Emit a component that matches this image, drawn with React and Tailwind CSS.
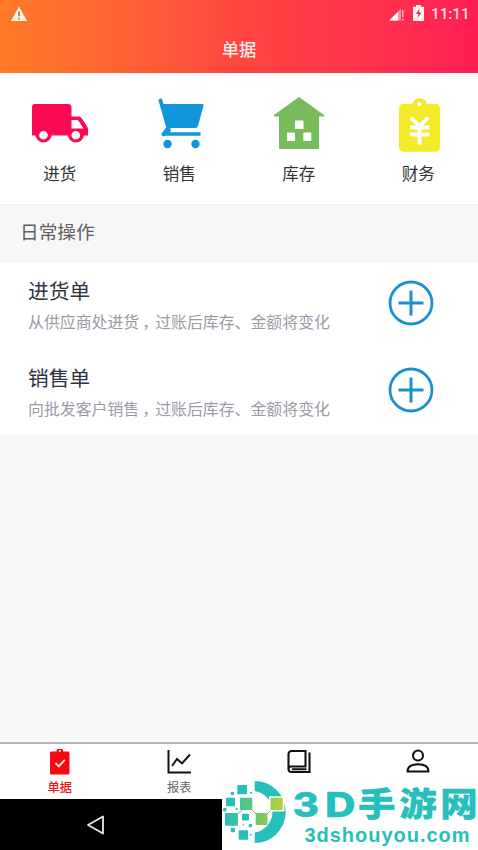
import React from "react";

const TEAL = "#26bfbc";

function StatusBar() {
  return (
    <div className="flex h-[26px] items-center pt-[2px]">
      <svg className="ml-[11px] h-[16px] w-[16px]" viewBox="0 0 16 16">
        <path d="M8 0.5L16 15H0z" fill="#fff4e6" />
        <path d="M8 5.5v5M8 12v1.6" stroke="#b8683a" strokeWidth="1.5" />
      </svg>
      <svg className="ml-auto mb-[2px] h-[15px] w-[17px]" viewBox="0 0 17 15">
        <path d="M0 14.500L12 2.500v12z" fill="#ff8fa0" />
        <path d="M0 14.500L9 6v8.500z" fill="#fff" />
        <path d="M13.800 4v7M13.800 12.500v2" stroke="#ffb0bc" strokeWidth="1.600" />
      </svg>
      <svg className="ml-[7px] mb-[3px] h-[16px] w-[11px]" viewBox="0 0 11 16">
        <path d="M3 0h5v1.800h3V16H0V1.800h3z" fill="#fff0f2" />
        <path d="M6.500 3.500L3 9h2.500L4.500 13 8.500 7.500H6z" fill="#cf3850" />
      </svg>
      <span className="ml-[7px] mr-[9px] w-[38px] whitespace-nowrap text-[15.200px] leading-[20px] text-[#ffdbe1] font-medium [font-family:Roboto,sans-serif]">11:11</span>
    </div>
  );
}

const TruckIcon = () => (
  <svg className="h-[56px] w-[56px]" viewBox="0 0 56 56">
    <path
      fillRule="evenodd"
      d="M3 7h33q3.500 0 3.500 3.500V19.500h7q2 0 3.200 1.800l5.300 8q1 1.500 1 3V38.500h-4a8.200 8.200 0 0 1-16.200 0H19.600a8.200 8.200 0 0 1-16.200 0H0V10q0-3 3-3zM39.500 23v8.500h12L46.500 23.800q-.500-.8-1.500-.8zM11.500 34a4.300 4.300 0 1 0 0 8.600 4.300 4.300 0 0 0 0-8.600zM43.800 34a4.300 4.300 0 1 0 0 8.600 4.300 4.300 0 0 0 0-8.600z"
      fill="#fa0a50"
    />
  </svg>
);

const CartIcon = () => (
  <svg className="ml-[3px] h-[56px] w-[48px]" viewBox="0 0 48 56">
    <path d="M3.500 3.500L12 33.500 6.500 37.500" fill="none" stroke="#1296db" strokeWidth="3.800" strokeLinecap="round" strokeLinejoin="round" />
    <path d="M4 7h41.500q1.400 0 1 1.500L41 29q-.7 2-2.500 2H12z" fill="#1296db" />
    <path d="M10.500 31.500L6.500 37h37" fill="none" stroke="#1296db" strokeWidth="3.600" strokeLinejoin="round" />
    <circle cx="10.500" cy="47" r="4.200" fill="#1296db" />
    <circle cx="38.500" cy="47" r="4.200" fill="#1296db" />
  </svg>
);

const HouseIcon = () => (
  <svg className="ml-[1px] h-[56px] w-[52px]" viewBox="0 0 52 56">
    <path
      fillRule="evenodd"
      d="M26 0L51 18q1 1.500-.5 1.500H46V51q0 1-1 1H7q-1 0-1-1V19.500H1.500Q0 19.500 1 18zM22 23.500v8.500h8.500v-8.500zM14 35.500V44h8v-8.500zM30.300 35.500V44h8v-8.500z"
      fill="#78bb5c"
    />
  </svg>
);

const FinanceIcon = () => (
  <svg className="ml-[3px] h-[56px] w-[42px]" viewBox="0 0 42 56">
    <path
      fillRule="evenodd"
      d="M5 7.500h8.500a7.500 7.500 0 0 1 14.500 0h8q5 0 5 5V50q0 5.500-5 5.500H5q-5 0-5-5.500V12.500q0-5 5-5zM20.500 6a2 2 0 1 0 0 4 2 2 0 0 0 0-4z"
      fill="#f3ea29"
      transform="translate(0 -.7)"
    />
    <path d="M12 20.500l8.500 9 8.500-9M20.500 29.500v18M11 30.500h19.500M11 37.500h19.500" fill="none" stroke="#fff" strokeWidth="4" />
  </svg>
);

const entries = [
  { label: "进货", Icon: TruckIcon },
  { label: "销售", Icon: CartIcon },
  { label: "库存", Icon: HouseIcon },
  { label: "财务", Icon: FinanceIcon },
];

function Operation({ title, before, after }) {
  return (
    <div className="flex h-[87px] items-start pl-[28px] pr-[44px]">
      <div className="flex-1 pt-[12px]">
        <div className="text-[20.700px] leading-[30px] text-[#303340]">{title}</div>
        <div className="mt-[5px] flex whitespace-nowrap text-[15.900px] leading-[24px] text-[#9a9ba6]">
          <span>{before}</span>
          <span className="w-[15.900px] pl-[3px] [font-feature-settings:'halt']">，</span>
          <span>{after}</span>
        </div>
      </div>
      <svg className="mt-[17px] h-[46px] w-[46px]" viewBox="0 0 46 46">
        <circle cx="23" cy="23" r="21" fill="none" stroke="#1a90d0" strokeWidth="2.800" />
        <path d="M23 10.500v25M10.500 23h25" stroke="#1a90d0" strokeWidth="3" />
      </svg>
    </div>
  );
}

function TabItem({ label, labelClass, children }) {
  return (
    <div className="flex flex-1 flex-col items-center pt-[5px]">
      <svg className="h-[27px] w-[26px]" viewBox="0 0 26 27">{children}</svg>
      <span className={`text-[12.300px] leading-[22px] ${labelClass || ""}`}>{label}</span>
    </div>
  );
}

const tiles = [
  [226, 797.700, 9, 8.500], [237.300, 785, 9.700, 9.300], [242, 813.700, 7, 6.700],
  [238.700, 830.300, 9.400, 9.400], [230.700, 791.700, 3.300, 3.300], [223, 808, 3.500, 3.200],
  [235.500, 808, 2.200, 2], [230.700, 828, 4.300, 4.300], [248.700, 824, 3.300, 3.200],
  [250, 791.700, 2, 2], [242.500, 824, 1.600, 1.600], [250, 834, 1.800, 1.800],
];

function Watermark() {
  return (
    <svg className="absolute bottom-0 right-0 h-[74px] w-[256px]" viewBox="222 776 256 74">
      <defs>
        <linearGradient id="blend" gradientUnits="userSpaceOnUse" x1="225" y1="0" x2="283" y2="0">
          <stop offset="0" stopColor="#26bfbc" />
          <stop offset=".5" stopColor="#66c66f" />
          <stop offset="1" stopColor="#b8d432" />
        </linearGradient>
      </defs>
      <path d="M254.700 781a31 31 0 0 1 0 62v-10.500a21 21 0 0 0 0-41.500z" fill={TEAL} />
      {tiles.map(([x, y, w, h], i) => (
        <rect key={i} x={x} y={y} width={w} height={h} rx=".8" fill={TEAL} />
      ))}
      <rect x="269" y="796.200" width="15.400" height="15.400" rx="1" fill="#fff" />
      <path d="M237 814.500l7-6M251 809l6 6M266 815l6-6" stroke="url(#blend)" strokeWidth="1" />
      <rect x="225" y="813" width="13" height="12.700" rx="1" fill="url(#blend)" />
      <rect x="240" y="797.700" width="12.300" height="12.300" rx="1" fill="url(#blend)" />
      <rect x="255.700" y="813" width="11.800" height="12" rx="1" fill="url(#blend)" />
      <rect x="270.500" y="797.700" width="12.300" height="12.300" rx="1" fill="url(#blend)" />
      <g fill={TEAL} stroke={TEAL}>
        <text x="292.500" y="816.500" fontSize="33.500" fontWeight="800" strokeWidth=".4" textLength="26.500" lengthAdjust="spacingAndGlyphs" className="[font-family:Inter,sans-serif]">3</text>
        <text x="325" y="816.500" fontSize="33.500" fontWeight="800" strokeWidth=".4" textLength="30.500" lengthAdjust="spacingAndGlyphs" className="[font-family:Inter,sans-serif]">D</text>
        <text transform="translate(358 816) scale(1.12 1)" x="0" y="0" fontSize="33.500" fontWeight="900" strokeWidth=".3" textLength="107" lengthAdjust="spacing" className="[font-family:'Noto_Sans_CJK_SC',sans-serif]">手游网</text>
        <text x="304.500" y="841.500" fontSize="20" fontWeight="700" stroke="none" textLength="165" lengthAdjust="spacing" className="[font-family:'Liberation_Sans',sans-serif]">3dshouyou.com</text>
      </g>
    </svg>
  );
}

export default function App() {
  return (
    <div className="relative flex h-[850px] w-[478px] flex-col overflow-hidden bg-[#f7f7f7] [font-family:'Noto_Sans_CJK_SC',sans-serif]">
      <header className="h-[73px] shrink-0 bg-linear-to-r from-[#ff7a25] via-[#ff4540] to-[#ff1c54]">
        <StatusBar />
        <h1 className="pt-[10px] text-center text-[17.300px] font-medium leading-[26px] text-[#ffe9e4]">单据</h1>
      </header>

      <div className="flex h-[132px] shrink-0 border-b border-[#f1f1f1] bg-white pt-[24px]">
        {entries.map(({ label, Icon }) => (
          <div key={label} className="flex flex-1 flex-col items-center">
            <Icon />
            <span className="mt-[8px] text-[16.500px] leading-[24px] text-[#333]">{label}</span>
          </div>
        ))}
      </div>

      <div className="h-[58px] shrink-0 pl-[20px] pt-[12px] text-[18.700px] leading-[28px] text-[#606060]">日常操作</div>

      <div className="h-[172px] shrink-0 bg-white">
        <Operation title="进货单" before="从供应商处进货" after="过账后库存、金额将变化" />
        <Operation title="销售单" before="向批发客户销售" after="过账后库存、金额将变化" />
      </div>

      <nav className="mt-auto flex h-[57px] shrink-0 border-t-2 border-[#b4b4b4] bg-white">
        <TabItem label="单据" labelClass="font-medium text-[#f51212]">
          <path fillRule="evenodd" d="M4.500 2.500h5a3.300 3.300 0 0 1 6.600 0h5q1.400 0 1.400 1.400V24q0 1.500-1.400 1.500H4.500Q3 25.500 3 24V4q0-1.500 1.500-1.500zM12.800 1a1 1 0 1 0 0 2 1 1 0 0 0 0-2z" fill="#fb0710" />
          <path d="M8.500 14l3.300 3.300 6-6.500" fill="none" stroke="#ffe8e8" strokeWidth="1.900" />
        </TabItem>
        <TabItem label="报表" labelClass="text-[#666]">
          <path d="M2.500 1v22.500H25" fill="none" stroke="#111" strokeWidth="2" />
          <path d="M6 17l5-7 5 4.500 8-9" fill="none" stroke="#111" strokeWidth="1.900" />
        </TabItem>
        <TabItem label="">
          <path d="M5.500 2h14v15.500H5A2.600 2.600 0 0 0 2.500 20V5a3 3 0 0 1 3-3zM2.500 20q0 3 3 3h18V3.500M6 20.200h14.500" fill="none" stroke="#111" strokeWidth="2.100" />
        </TabItem>
        <TabItem label="">
          <circle cx="13" cy="6.500" r="5" fill="none" stroke="#111" strokeWidth="2.100" />
          <path d="M2.500 22.500c0-5 4.500-7.300 10.500-7.300s10.500 2.300 10.500 7.300z" fill="none" stroke="#111" strokeWidth="2.100" strokeLinejoin="round" />
        </TabItem>
      </nav>

      <div className="flex h-[51px] shrink-0 bg-white">
        <div className="flex w-[222px] items-center bg-black pl-[86px]">
          <svg className="h-[20px] w-[19px]" viewBox="0 0 19 20">
            <path d="M17 1.500v17L2 10z" fill="none" stroke="#e8e8e8" strokeWidth="1.800" strokeLinejoin="round" />
          </svg>
        </div>
      </div>
      <Watermark />
    </div>
  );
}
